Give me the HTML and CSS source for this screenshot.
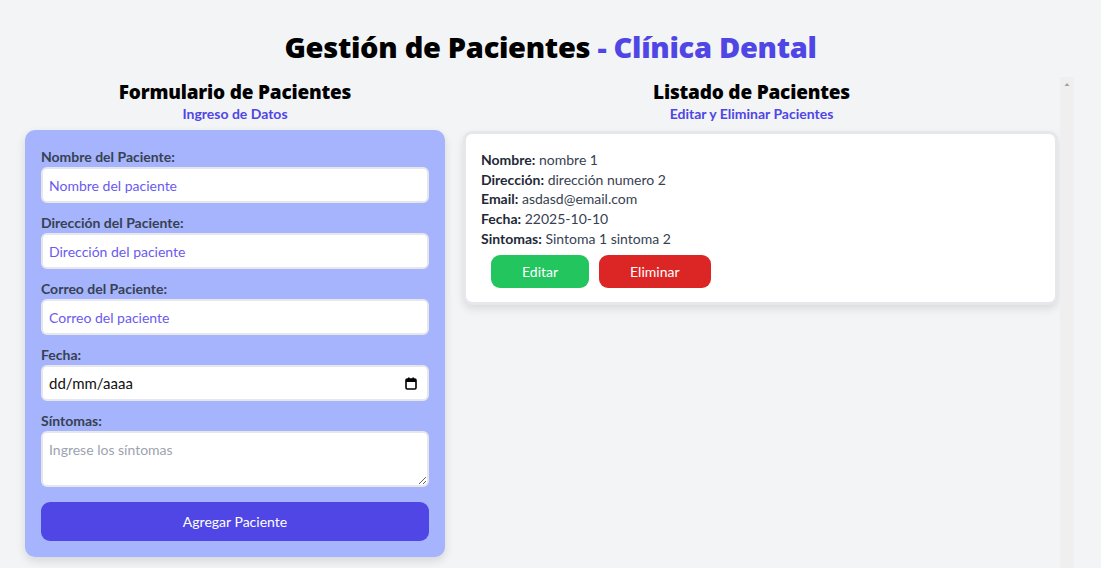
FILE: index.html
```html
<!DOCTYPE html>
<html lang="es">
<head>
<meta charset="utf-8">
<title>Gestión de Pacientes</title>
<link rel="stylesheet" href="styles.css">
</head>
<body>
  <h1 class="title">Gestión de Pacientes <span class="accent">- Clínica Dental</span></h1>
  <main class="layout">
    <section class="form-col">
      <h2 class="col-title">Formulario de Pacientes</h2>
      <p class="col-sub">Ingreso de Datos</p>
      <form class="form-card">
        <div class="field">
          <label class="label">Nombre del Paciente:</label>
          <input class="input" type="text" placeholder="Nombre del paciente">
        </div>
        <div class="field">
          <label class="label">Dirección del Paciente:</label>
          <input class="input" type="text" placeholder="Dirección del paciente">
        </div>
        <div class="field">
          <label class="label">Correo del Paciente:</label>
          <input class="input" type="email" placeholder="Correo del paciente">
        </div>
        <div class="field">
          <label class="label">Fecha:</label>
          <div class="input date-input"><span>dd/mm/aaaa</span>
            <svg class="cal" width="12" height="13" viewBox="0 0 12 13"><rect x="1" y="2" width="10" height="10" rx="1.2" fill="none" stroke="#000" stroke-width="1.6"/><rect x="1" y="2" width="10" height="3" fill="#000"/><rect x="3" y="0.5" width="1.6" height="3" fill="#000"/><rect x="7.4" y="0.5" width="1.6" height="3" fill="#000"/></svg>
          </div>
        </div>
        <div class="field">
          <label class="label">Síntomas:</label>
          <textarea class="input textarea" placeholder="Ingrese los síntomas"></textarea>
        </div>
        <button type="button" class="btn-submit">Agregar Paciente</button>
      </form>
    </section>
    <section class="list-col">
      <h2 class="col-title">Listado de Pacientes</h2>
      <p class="col-sub">Editar y Eliminar Pacientes</p>
      <div class="patient-card">
        <p class="row"><b>Nombre:</b> nombre 1</p>
        <p class="row"><b>Dirección:</b> dirección numero 2</p>
        <p class="row"><b>Email:</b> asdasd@email.com</p>
        <p class="row"><b>Fecha:</b> 22025-10-10</p>
        <p class="row"><b>Sintomas:</b> Sintoma 1 sintoma 2</p>
        <div class="actions">
          <button type="button" class="btn btn-edit">Editar</button>
          <button type="button" class="btn btn-delete">Eliminar</button>
        </div>
      </div>
    </section>
    <div class="scroll-track" aria-hidden="true">
      <svg width="14" height="14" viewBox="0 0 14 14"><path d="M4.5 9 L7 6 L9.5 9 Z" fill="#a3a3a3"/></svg>
    </div>
  </main>
</body>
</html>
```

FILE: styles.css
```css
* { box-sizing: border-box; }
html, body { height: 100%; }
body {
  margin: 0;
  background: #f3f4f6;
  font-family: "Lato", "Open Sans", sans-serif;
  color: #374151;
  overflow: hidden;
}
.title {
  margin: 0;
  padding-top: 29px;
  height: 77px;
  text-align: center;
  font-family: "Open Sans", sans-serif;
  font-size: 29px;
  font-weight: 800;
  line-height: 36px;
  letter-spacing: -0.3px;
  color: #000;
}
.accent { color: #4f46e5; }
.layout {
  display: grid;
  grid-template-columns: 420px 615px 14px;
  margin-left: 25px;
  height: calc(100% - 77px);
}
.form-col { padding-top: 3px; }
.col-title {
  margin: 0;
  text-align: center;
  font-family: "Open Sans", sans-serif;
  font-size: 19px;
  font-weight: 800;
  line-height: 24px;
  letter-spacing: -0.2px;
  color: #000;
}
.col-sub {
  margin: 0;
  text-align: center;
  font-size: 14px;
  font-weight: 700;
  line-height: 20px;
  color: #4f46e5;
}
.form-card {
  margin-top: 6px;
  background: #a5b4fc;
  border-radius: 10px;
  padding: 17px 16px 16px;
  box-shadow: 0 4px 10px rgba(0,0,0,0.12);
}
.field { margin-bottom: 10px; }
.label {
  display: block;
  font-size: 14px;
  font-weight: 700;
  line-height: 20px;
  color: #374151;
}
.input {
  display: block;
  width: 100%;
  height: 36px;
  border: 2px solid #e5e7eb;
  border-radius: 6px;
  background: #fff;
  padding: 0 6px;
  font-family: inherit;
  font-size: 14px;
  color: #111827;
  outline: none;
}
.input::placeholder { color: #6a5af0; }
.date-input {
  display: flex;
  align-items: center;
  justify-content: space-between;
  padding-right: 10px;
  font-size: 15px;
  color: #111;
}
.textarea {
  height: 56px;
  padding-top: 8px;
  resize: vertical;
}
.textarea::placeholder { color: #9ca3af; }
.btn-submit {
  display: block;
  width: 100%;
  height: 39px;
  margin-top: 15px;
  border: 0;
  border-radius: 9px;
  background: #4f46e5;
  color: #fff;
  font-family: inherit;
  font-size: 14px;
}
.list-col {
  padding: 3px 2px 0 18px;
}
.list-col .col-title, .list-col .col-sub { margin-left: -18px; }
.scroll-track {
  background: #efefef;
}
.scroll-track svg { display: block; }
.patient-card {
  margin-top: 7px;
  background: #fff;
  border: 3px solid #e5e7eb;
  border-radius: 9px;
  padding: 16px 15px 14px;
  box-shadow: 0 4px 8px rgba(0,0,0,0.10);
}
.row {
  margin: 0;
  font-size: 14px;
  line-height: 19.7px;
  color: #374151;
}
.row b { color: #1f2937; font-weight: 700; }
.actions {
  display: flex;
  gap: 10px;
  margin-top: 6px;
  padding-left: 10px;
}
.btn {
  height: 33px;
  padding: 0 31px;
  border: 0;
  border-radius: 9px;
  color: #fff;
  font-family: inherit;
  font-size: 14px;
}
.btn-edit { background: #22c55e; }
.btn-delete { background: #dc2626; }
```
